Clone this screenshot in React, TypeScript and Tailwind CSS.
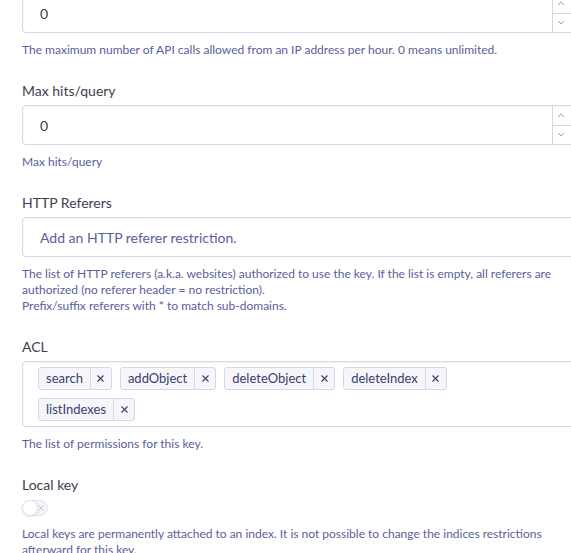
import React from "react";

const font = { fontFamily: "Lato, 'Liberation Sans', sans-serif" };

function Label({ children }: { children: React.ReactNode }) {
  return <div className="h-[20px] leading-[20px] text-[14px] text-[#3e3e4e]">{children}</div>;
}

function Help({ children, className = "mt-[9px]" }: { children: React.ReactNode; className?: string }) {
  return <div className={`${className} text-[12px] leading-[16px] text-[#5a5e9a] whitespace-nowrap`}>{children}</div>;
}

function Spinner() {
  return (
    <div className="flex flex-col w-[22px] border-l border-[#d6d6e7]">
      <div className="flex-1 flex items-center justify-start pl-[4px] border-b border-[#d6d6e7]">
        <svg width="8" height="6" viewBox="0 0 8 6"><path d="M1 5 L4 2 L7 5" stroke="#9a9ab0" strokeWidth="1" fill="none" /></svg>
      </div>
      <div className="flex-1 flex items-center justify-start pl-[4px]">
        <svg width="8" height="6" viewBox="0 0 8 6"><path d="M1 1 L4 4 L7 1" stroke="#9a9ab0" strokeWidth="1" fill="none" /></svg>
      </div>
    </div>
  );
}

function NumberInput() {
  return (
    <div className="flex h-[40px] w-[553px] rounded-[4px] border border-[#d6d6e7] bg-white shadow-[inset_0_1px_2px_rgba(35,38,59,0.06)]">
      <div className="flex-1 flex items-center pl-[17px] text-[14px] text-[#3a3a4a]">0</div>
      <Spinner />
    </div>
  );
}

function Tag({ name }: { name: string }) {
  return (
    <div className="flex h-[23px] items-stretch rounded-[3px] border border-[#d6d6e7] bg-[#f5f5fa] text-[13px] text-[#3a416f]">
      <span className="flex items-center px-[7px]">{name}</span>
      <span className="flex items-center justify-center w-[21px] border-l border-[#d6d6e7]">
        <svg width="9" height="9" viewBox="0 0 9 9"><path d="M1.5 1.5 L7.5 7.5 M7.5 1.5 L1.5 7.5" stroke="#3a416f" strokeWidth="1.1" /></svg>
      </span>
    </div>
  );
}

export default function App() {
  return (
    <div className="w-[571px] h-[553px] overflow-hidden bg-white" style={font}>
      <div className="pl-[22px] -mt-[7px]">
        <NumberInput />
        <Help>The maximum number of API calls allowed from an IP address per hour. 0 means unlimited.</Help>

        <div className="mt-[23px]">
          <Label>Max hits/query</Label>
          <div className="mt-[4px]"><NumberInput /></div>
          <Help>Max hits/query</Help>
        </div>

        <div className="mt-[23px]">
          <Label>HTTP Referers</Label>
          <div className="mt-[4px] flex h-[40px] w-[553px] items-center rounded-[4px] border border-[#d6d6e7] bg-white pl-[17px] text-[14px] text-[#5a5e9a] shadow-[inset_0_1px_2px_rgba(35,38,59,0.06)]">
            Add an HTTP referer restriction.
          </div>
          <Help>
            The list of HTTP referers (a.k.a. websites) authorized to use the key. If the list is empty, all referers are
            <br />
            authorized (no referer header = no restriction).
            <br />
            Prefix/suffix referers with * to match sub-domains.
          </Help>
        </div>

        <div className="mt-[23px]">
          <Label>ACL</Label>
          <div className="mt-[4px] w-[553px] rounded-[4px] border border-[#d6d6e7] bg-white pl-[15px] pt-[5px] pb-[5px] shadow-[inset_0_1px_2px_rgba(35,38,59,0.06)]">
            <div className="flex flex-wrap gap-x-[8px] gap-y-[8px] w-[420px]">
              <Tag name="search" />
              <Tag name="addObject" />
              <Tag name="deleteObject" />
              <Tag name="deleteIndex" />
              <Tag name="listIndexes" />
            </div>
          </div>
          <Help>The list of permissions for this key.</Help>
        </div>

        <div className="mt-[23px]">
          <Label>Local key</Label>
          <div className="mt-[5px] relative h-[16px] w-[26px] rounded-full border border-[#e4e4ee] bg-[#f3f3f8]">
            <div className="absolute left-[-1px] top-[-1px] h-[16px] w-[16px] rounded-full bg-white border border-[#e4e4ee] shadow-[0_1px_2px_rgba(35,38,59,0.1)]" />
            <svg className="absolute right-[3px] top-[4px]" width="6" height="6" viewBox="0 0 6 6"><path d="M0.5 0.5 L5.5 5.5 M5.5 0.5 L0.5 5.5" stroke="#c4c4dc" strokeWidth="1" /></svg>
          </div>
          <Help className="mt-[10px]">
            Local keys are permanently attached to an index. It is not possible to change the indices restrictions
            <br />
            afterward for this key.
          </Help>
        </div>
      </div>
    </div>
  );
}
